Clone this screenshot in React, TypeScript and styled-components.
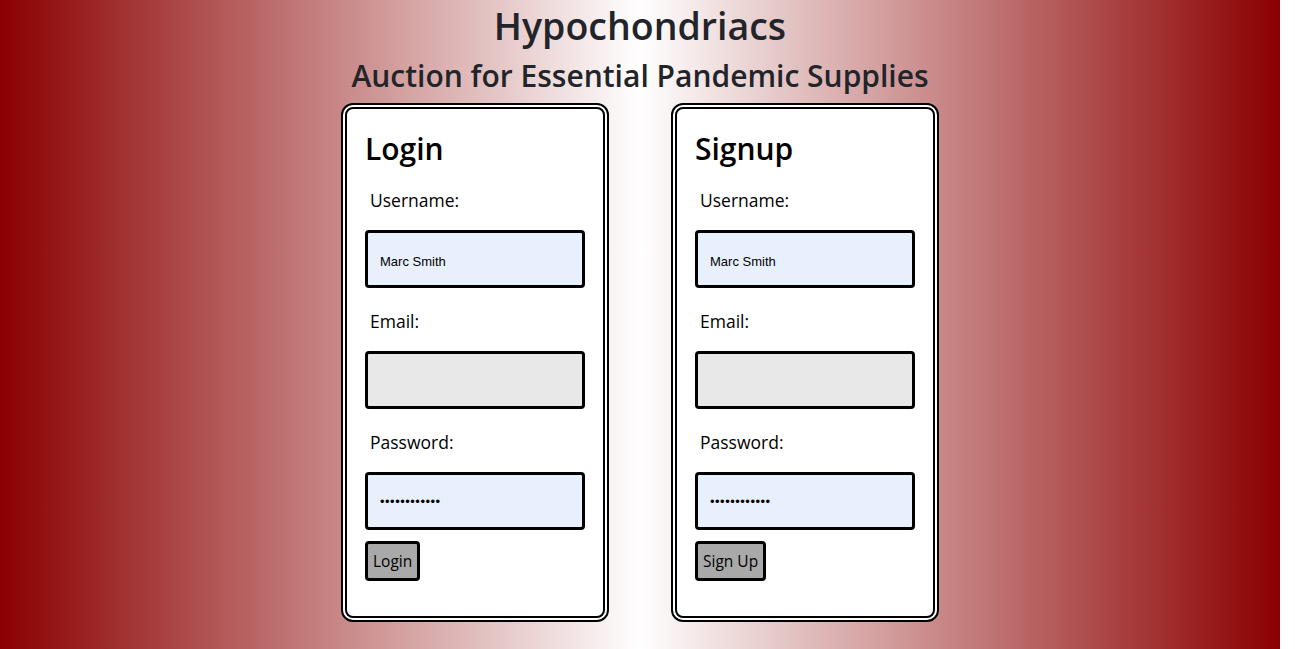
import React from "react";
import styled, { createGlobalStyle } from "styled-components";

const Global = createGlobalStyle`
  html, body { margin: 0; padding: 0; background: #fff; }
  body { font-family: "Open Sans", "Noto Sans", sans-serif; color: #212529; }
  * { box-sizing: border-box; }
`;

const Page = styled.div`
  width: 1280px;
  min-height: 649px;
  background: linear-gradient(to right, #8b0000, #ffffff, #8b0000);
  display: flex;
  flex-direction: column;
  align-items: center;
  padding-bottom: 28px;
`;

const Title = styled.h1`
  margin: 0;
  font-size: 37.5px;
  font-weight: 600;
  line-height: 52px;
  color: #212529;
`;

const Subtitle = styled.h2`
  margin: 0;
  font-size: 30px;
  font-weight: 600;
  line-height: 48px;
  color: #212529;
`;

const Cards = styled.div`
  display: flex;
  gap: 62px;
  margin-top: 3px;
`;

const Card = styled.form`
  width: 268px;
  border: 6px double #000;
  border-radius: 12px;
  background: #fff;
  padding: 16px 18px 35px;
  display: flex;
  flex-direction: column;
  align-items: flex-start;
`;

const CardTitle = styled.h3`
  margin: 0 0 15px;
  font-size: 30px;
  font-weight: 600;
  line-height: 48px;
  color: #000;
`;

const Label = styled.label`
  display: block;
  font-size: 17.5px;
  line-height: 25px;
  color: #000;
  margin: 0 0 17px 5px;
`;

const Input = styled.input<{ $filled?: boolean }>`
  display: block;
  flex: none;
  width: 220px;
  height: 58px;
  border: 3px solid #000;
  border-radius: 4px;
  background: ${(p) => (p.$filled ? "#e8f0fe" : "#e8e8e8")};
  padding: 4px 0 0 12px;
  font-family: Arial, "Liberation Sans", sans-serif;
  font-size: 13px;
  color: #000;
  margin-bottom: 21px;
  outline: none;
  &[type="password"] {
    font-size: 13px;
    letter-spacing: 0.5px;
    padding-top: 0;
  }
`;

const PasswordInput = styled(Input)`
  margin-bottom: 11px;
`;

const Button = styled.button`
  flex: none;
  height: 40px;
  border: 3px solid #000;
  border-radius: 4px;
  background: #a9a9a9;
  padding: 0 5px;
  font-family: "Open Sans", "Noto Sans", sans-serif;
  font-size: 15.5px;
  color: #000;
`;

const AuthCard = ({ title, button }: { title: string; button: string }) => (
  <Card onSubmit={(e) => e.preventDefault()}>
    <CardTitle>{title}</CardTitle>
    <Label>Username:</Label>
    <Input $filled type="text" defaultValue="Marc Smith" />
    <Label>Email:</Label>
    <Input type="text" />
    <Label>Password:</Label>
    <PasswordInput $filled type="password" defaultValue="password1234" />
    <Button type="button">{button}</Button>
  </Card>
);

export default function App() {
  return (
    <>
      <Global />
      <Page>
        <Title>Hypochondriacs</Title>
        <Subtitle>Auction for Essential Pandemic Supplies</Subtitle>
        <Cards>
          <AuthCard title="Login" button="Login" />
          <AuthCard title="Signup" button="Sign Up" />
        </Cards>
      </Page>
    </>
  );
}
